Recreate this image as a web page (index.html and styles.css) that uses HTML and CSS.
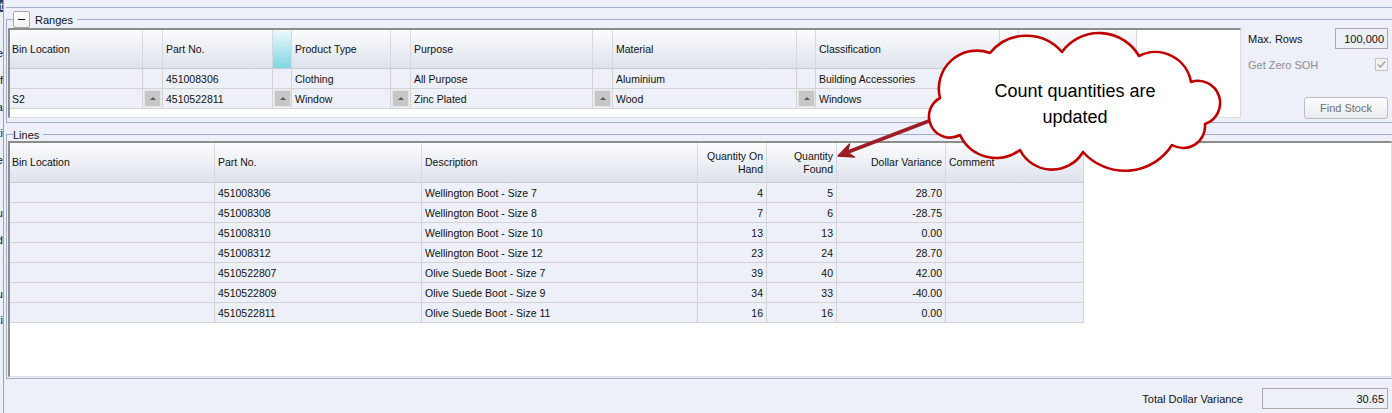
FILE: index.html
```html
<!DOCTYPE html>
<html lang="en">
<head>
  <meta charset="UTF-8" />
  <title>Stock Count - Lines</title>
  <link rel="stylesheet" href="styles.css">
</head>
<body>
  <div class="app">
    <div class="side">
      <div class="side-title"><span>List</span></div>
      <div class="side-list">
        <div class="side-item"><span>Store</span></div>
        <div class="side-item"><span>Count Ref</span></div>
        <div class="side-item"><span>Area</span></div>
        <div class="side-item"><span>Multi</span></div>
        <div class="side-item"><span>Archive</span></div>
        <div class="side-item"><span></span></div>
        <div class="side-item"><span>Menu</span></div>
        <div class="side-item"><span>Find</span></div>
        <div class="side-item"><span></span></div>
        <div class="side-item"><span>Menu</span></div>
        <div class="side-item"><span>Taxi</span></div>
      </div>
    </div>

    <div class="main">
      <div class="topbar"></div>

      <!-- Ranges -->
      <div class="group ranges">
        <div class="legend">
          <button class="collapse"><span></span></button>
          <span>Ranges</span>
        </div>
        <div class="group-body">
          <div class="grid ranges-grid">
            <div class="cells">
              <div class="cell head">Bin Location</div>
              <div class="cell head"></div>
              <div class="cell head">Part No.</div>
              <div class="cell head sel"></div>
              <div class="cell head">Product Type</div>
              <div class="cell head"></div>
              <div class="cell head">Purpose</div>
              <div class="cell head"></div>
              <div class="cell head">Material</div>
              <div class="cell head"></div>
              <div class="cell head">Classification</div>
              <div class="cell head"></div>
              <div class="cell head"></div>
              <div class="cell head"></div>

              <div class="cell"></div>
              <div class="cell"></div>
              <div class="cell">451008306</div>
              <div class="cell"></div>
              <div class="cell">Clothing</div>
              <div class="cell"></div>
              <div class="cell">All Purpose</div>
              <div class="cell"></div>
              <div class="cell">Aluminium</div>
              <div class="cell"></div>
              <div class="cell">Building Accessories</div>
              <div class="cell"></div>
              <div class="cell"></div>
              <div class="cell"></div>

              <div class="cell">S2</div>
              <div class="cell btn-cell"><span class="spin"></span></div>
              <div class="cell">4510522811</div>
              <div class="cell btn-cell"><span class="spin"></span></div>
              <div class="cell">Window</div>
              <div class="cell btn-cell"><span class="spin"></span></div>
              <div class="cell">Zinc Plated</div>
              <div class="cell btn-cell"><span class="spin"></span></div>
              <div class="cell">Wood</div>
              <div class="cell btn-cell"><span class="spin"></span></div>
              <div class="cell">Windows</div>
              <div class="cell btn-cell"><span class="spin"></span></div>
              <div class="cell"></div>
              <div class="cell"></div>
            </div>
          </div>

          <div class="panel">
            <div class="panel-row">
              <span>Max. Rows</span>
              <div class="field max-rows">100,000</div>
            </div>
            <div class="panel-row muted">
              <span>Get Zero SOH</span>
              <span class="check">
                <svg width="11" height="11" viewBox="0 0 11 11"><path d="M2 5.5 L4.5 8 L9 2.5" fill="none" stroke="#a9a9a9" stroke-width="1.6"/></svg>
              </span>
            </div>
            <button class="btn">Find Stock</button>
          </div>
        </div>
      </div>

      <!-- Lines -->
      <div class="group lines">
        <div class="legend"><span>Lines</span></div>
        <div class="group-body">
          <div class="grid lines-grid">
            <div class="cells">
              <div class="cell head">Bin Location</div>
              <div class="cell head">Part No.</div>
              <div class="cell head">Description</div>
              <div class="cell head num"><span>Quantity On<br>Hand</span></div>
              <div class="cell head num"><span>Quantity<br>Found</span></div>
              <div class="cell head num">Dollar Variance</div>
              <div class="cell head">Comment</div>

              <div class="cell"></div><div class="cell">451008306</div><div class="cell">Wellington Boot - Size 7</div>
              <div class="cell num">4</div><div class="cell num">5</div><div class="cell num">28.70</div><div class="cell"></div>

              <div class="cell"></div><div class="cell">451008308</div><div class="cell">Wellington Boot - Size 8</div>
              <div class="cell num">7</div><div class="cell num">6</div><div class="cell num">-28.75</div><div class="cell"></div>

              <div class="cell"></div><div class="cell">451008310</div><div class="cell">Wellington Boot - Size 10</div>
              <div class="cell num">13</div><div class="cell num">13</div><div class="cell num">0.00</div><div class="cell"></div>

              <div class="cell"></div><div class="cell">451008312</div><div class="cell">Wellington Boot - Size 12</div>
              <div class="cell num">23</div><div class="cell num">24</div><div class="cell num">28.70</div><div class="cell"></div>

              <div class="cell"></div><div class="cell">4510522807</div><div class="cell">Olive Suede Boot - Size 7</div>
              <div class="cell num">39</div><div class="cell num">40</div><div class="cell num">42.00</div><div class="cell"></div>

              <div class="cell"></div><div class="cell">4510522809</div><div class="cell">Olive Suede Boot - Size 9</div>
              <div class="cell num">34</div><div class="cell num">33</div><div class="cell num">-40.00</div><div class="cell"></div>

              <div class="cell"></div><div class="cell">4510522811</div><div class="cell">Olive Suede Boot - Size 11</div>
              <div class="cell num">16</div><div class="cell num">16</div><div class="cell num">0.00</div><div class="cell"></div>
            </div>
          </div>
        </div>
      </div>

      <div class="footer">
        <span>Total Dollar Variance</span>
        <div class="field total">30.65</div>
      </div>
    </div>

    <!-- callout drawn over the grids -->
    <div class="callout">
      <svg width="1392" height="413" viewBox="0 0 1392 413">
        <path d="M934 119 L848 152" stroke="#9c1d26" stroke-width="3.5" fill="none"/>
        <polygon points="838,156 849.5,144 847.3,152.4 854.5,157.1" fill="#9c1d26" stroke="#9c1d26" stroke-width="1.5" stroke-linejoin="round"/>
        <path d="M940 98 A38 38 0 0 1 990 53 A47 47 0 0 1 1062 52 A46 46 0 0 1 1139 56 A36 36 0 0 1 1191 82 A22 22 0 0 1 1205 124 A22 22 0 0 1 1172 145 A56 56 0 0 1 1083 152 A36 36 0 0 1 1020 150 A40 40 0 0 1 960 135 A21 21 0 0 1 940 98 Z"
              fill="#fff" stroke="#c00000" stroke-width="2.6" stroke-linejoin="round"/>
      </svg>
      <div class="callout-text">Count quantities are<br>updated</div>
    </div>
  </div>
</body>
</html>
```

FILE: styles.css
```css
:root {
  --bg: #edf0f8;
  --frame: #9fadc8;
  --grid-line: #d3d3d3;
  --head-line: #d3d8e1;
}

* {
  box-sizing: border-box;
}

body {
  margin: 0;
  font-family: "Liberation Sans", Arial, sans-serif;
  font-size: 10.5px;
  color: #111;
}

.app {
  position: relative;
  width: 1392px;
  height: 413px;
  display: flex;
  background: var(--bg);
  overflow: hidden;
}

/* clipped navigation strip on the left */
.side {
  width: 4px;
  flex: none;
  border-right: 1px solid #98a4bb;
  overflow: hidden;
  font-size: 11px;
}

.side-title {
  height: 12px;
  background: #2d3f66;
  color: #fff;
  display: flex;
  justify-content: flex-end;
  line-height: 12px;
}

.side-list {
  padding-top: 28px;
}

.side-item {
  height: 26.7px;
  display: flex;
  justify-content: flex-end;
  align-items: center;
  white-space: nowrap;
}

.side-item span,
.side-title span {
  flex-shrink: 0;
}

.main {
  flex: 1;
  min-width: 0;
  padding-left: 2px;
  display: flex;
  flex-direction: column;
}

.topbar {
  height: 8px;
  flex: none;
  border-bottom: 1px solid var(--frame);
}

/* group boxes */
.group {
  flex: none;
  border-top: 1px solid var(--frame);
  border-left: 1px solid var(--frame);
  border-bottom: 1px solid var(--frame);
}

.ranges {
  margin-top: 11px;
}

.lines {
  margin-top: 11px;
}

.legend {
  display: flex;
  align-items: center;
  gap: 5px;
  width: max-content;
  height: 17px;
  margin: -9px 0 0 6px;
  padding-right: 4px;
  background: var(--bg);
  font-size: 11px;
}

.lines .legend {
  height: 13px;
  margin-top: -7px;
}

.collapse {
  width: 17px;
  height: 17px;
  padding: 0;
  border: 1px solid #a7a7a7;
  border-radius: 2px;
  background: linear-gradient(#fff, #f1f1f1);
  display: flex;
  align-items: center;
  justify-content: center;
}

.collapse span {
  width: 7px;
  height: 1px;
  background: #111;
}

.group-body {
  display: flex;
  padding: 0 0 3px 1px;
}

.lines .group-body {
  padding-bottom: 1px;
}

/* grids */
.grid {
  background: #fff;
  border-top: 2px solid #8d8d8d;
  border-left: 2px solid #8d8d8d;
  border-right: 1px solid #dcdcdc;
  border-bottom: 1px solid #dcdcdc;
  overflow: hidden;
}

.cells {
  display: grid;
  grid-auto-rows: 20px;
  width: max-content;
}

.ranges-grid {
  width: 1233px;
  height: 90px;
  flex: none;
}

.ranges-grid .cells {
  grid-template-columns: 133px 20px 110px 19px 99px 20px 182px 20px 184px 19px 184px 19px 98px 20px;
  grid-template-rows: 39px;
}

.lines-grid {
  flex: 1;
  height: 236px;
}

.lines-grid .cells {
  grid-template-columns: 205px 207px 276px 69px 70px 109px 138px;
  grid-template-rows: 40px;
}

.cell {
  display: flex;
  align-items: center;
  padding: 0 2px 0 3px;
  white-space: nowrap;
  overflow: hidden;
  background: var(--bg);
  border-right: 1px solid var(--grid-line);
  border-bottom: 1px solid var(--grid-line);
}

.cell:first-child,
.cells .cell:nth-child(14n+1) {
  padding-left: 2px;
}

.cell.num {
  justify-content: flex-end;
  padding-right: 3px;
  text-align: right;
}

.cell.head {
  background: linear-gradient(#fbfcfd, #dde2ec);
  border-right-color: var(--head-line);
  border-bottom-color: #c6ccd7;
  line-height: 13px;
}

.cell.head.sel {
  background: linear-gradient(#eef9fb, #7fd6e4);
}

.btn-cell {
  padding: 0 0 0 1px;
}

.spin {
  width: 17px;
  height: 17px;
  background: #c6c6c6;
  border: 1px solid #e2e2e2;
  display: flex;
  align-items: center;
  justify-content: center;
}

.spin::before {
  content: "";
  border-left: 3px solid transparent;
  border-right: 3px solid transparent;
  border-bottom: 3px solid #5a5a5a;
}

/* right-hand options */
.panel {
  flex: 1;
  display: flex;
  flex-direction: column;
  padding: 0 4px 0 7px;
  font-size: 11px;
}

.panel-row {
  display: flex;
  justify-content: space-between;
  align-items: center;
}

.panel-row.muted {
  margin-top: 9px;
  color: #8c8c8c;
}

.field {
  height: 21px;
  border: 1px solid #a9a9a9;
  background: #eef0f8;
  display: flex;
  align-items: center;
  justify-content: flex-end;
  padding-right: 3px;
  font-size: 11px;
}

.max-rows {
  width: 53px;
}

.check {
  width: 13px;
  height: 13px;
  border: 1px solid #c3c3c3;
  background: #f2f2f2;
  display: flex;
  align-items: center;
  justify-content: center;
}

.btn {
  align-self: flex-end;
  margin-top: 26px;
  width: 84px;
  height: 22px;
  padding: 0;
  border: 1px solid #b9bdc6;
  border-radius: 3px;
  background: linear-gradient(#fdfdfd, #e9ebef);
  color: #6f6f6f;
  font-family: inherit;
  font-size: 11px;
}

/* footer total */
.footer {
  flex: 1;
  display: flex;
  justify-content: flex-end;
  align-items: center;
  gap: 19px;
  padding: 5px 4px 0 0;
  font-size: 11px;
}

.total {
  width: 126px;
}

/* annotation */
.callout {
  position: absolute;
  top: 0;
  left: 0;
  width: 1392px;
  height: 413px;
  pointer-events: none;
}

.callout svg {
  display: block;
}

.callout-text {
  position: absolute;
  left: 985px;
  top: 78px;
  width: 180px;
  text-align: center;
  font-size: 18px;
  line-height: 26px;
  color: #000;
}
```
